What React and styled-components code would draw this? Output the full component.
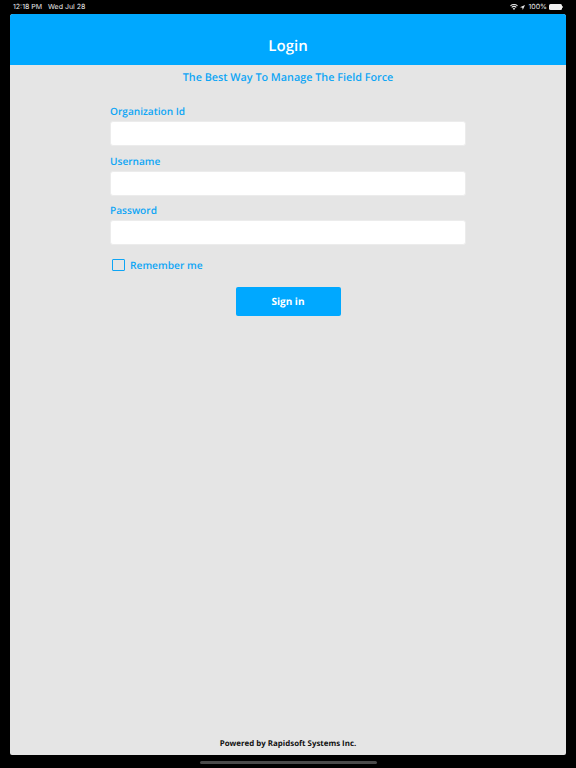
import React from 'react';
import styled, { createGlobalStyle } from 'styled-components';

const GlobalStyle = createGlobalStyle`
  html, body {
    margin: 0;
    padding: 0;
    background: #000;
    text-rendering: geometricPrecision;
  }
  #root {
    height: 768px;
  }
`;

const Screen = styled.div`
  width: 576px;
  height: 768px;
  background: #000;
  display: flex;
  flex-direction: column;
  overflow: hidden;
`;

const StatusBar = styled.div`
  height: 14px;
  flex: none;
  padding: 0 13px;
  display: flex;
  align-items: center;
  justify-content: space-between;
  color: #e8e8e8;
  font: 400 7px/12px Inter, sans-serif;
`;

const StatusGroup = styled.div`
  display: flex;
  align-items: center;
  gap: ${(props) => props.gap || 3}px;
`;

const Panel = styled.main`
  flex: none;
  height: 741px;
  margin: 0 10px;
  background: #e5e5e5;
  border-radius: 3px 3px 2px 2px;
  display: flex;
  flex-direction: column;
  overflow: hidden;
  font-family: 'Open Sans', sans-serif;
`;

const Header = styled.header`
  height: 51px;
  flex: none;
  background: #00a8ff;
  color: #fff;
  display: flex;
  align-items: flex-end;
  justify-content: center;
  padding-bottom: 7.5px;
  box-sizing: border-box;
  font-size: 15px;
  font-weight: 600;
  line-height: 24px;
`;

const Tagline = styled.h2`
  margin: 4px 0 0;
  text-align: center;
  color: #0ea5f5;
  font-size: 10.8px;
  font-weight: 600;
  line-height: 18px;
`;

const Form = styled.form`
  width: 356px;
  margin: 17.4px auto 0;
  display: flex;
  flex-direction: column;
`;

const Field = styled.div`
  display: flex;
  flex-direction: column;
  margin-bottom: 7.5px;
`;

const Label = styled.label`
  color: #0ea5f5;
  font-size: 10.1px;
  font-weight: 600;
  line-height: 15px;
  margin-bottom: 2px;
`;

const Input = styled.input`
  height: 25px;
  box-sizing: border-box;
  background: #fff;
  border: 1px solid #ececec;
  border-radius: 3px;
  outline: none;
`;

const RememberRow = styled.div`
  display: flex;
  align-items: center;
  gap: 5.5px;
  margin: 2px 0 0 2px;
  height: 20px;
`;

const Checkbox = styled.span`
  width: 12.5px;
  height: 12.5px;
  box-sizing: border-box;
  border: 1.5px solid #0ea5f5;
  border-radius: 1px;
`;

const RememberText = styled.span`
  color: #0ea5f5;
  font-size: 10.2px;
  font-weight: 600;
`;

const SignIn = styled.button`
  align-self: center;
  width: 105px;
  height: 29px;
  margin-top: 12px;
  border: none;
  border-radius: 2px;
  background: #00a8ff;
  color: #fff;
  font-family: 'Open Sans', sans-serif;
  font-size: 10px;
  font-weight: 700;
  text-rendering: geometricPrecision;
`;

const Footer = styled.footer`
  margin-top: auto;
  padding-bottom: 4.5px;
  text-align: center;
  color: #111;
  font-size: 7.9px;
  font-weight: 700;
  line-height: 13px;
`;

const HomeArea = styled.div`
  flex: 1;
  display: flex;
  align-items: flex-end;
  justify-content: center;
  padding-bottom: 4px;
`;

const HomeBar = styled.div`
  width: 177px;
  height: 3px;
  border-radius: 2px;
  background: #4a4a4a;
`;

const BatteryBody = styled.span`
  width: 13px;
  height: 6px;
  margin-left: -1px;
  border-radius: 1.5px;
  background: #f0f0f0;
`;

const BatteryCap = styled.span`
  width: 1px;
  height: 2px;
  margin-left: -3px;
  background: #999;
`;

const LocationSvg = styled.svg`
  margin-left: -1px;
`;

const WifiIcon = () => (
  <svg width="8" height="6" viewBox="0 0 18 14" fill="#eee">
    <path d="M9 14 6 10.5a4.4 4.4 0 0 1 6 0zM4.5 8.8 2.7 6.8a9.3 9.3 0 0 1 12.6 0l-1.8 2a6.7 6.7 0 0 0-9 0zM1.4 5.3 0 3.6a13.4 13.4 0 0 1 18 0l-1.4 1.7a11 11 0 0 0-15.2 0z" />
  </svg>
);

const LocationIcon = () => (
  <LocationSvg width="5" height="5" viewBox="0 0 12 12" fill="#eee">
    <path d="M12 0 0 5.4l5.6.9.9 5.7z" />
  </LocationSvg>
);

export default function App() {
  return (
    <>
      <GlobalStyle />
      <Screen>
        <StatusBar>
          <StatusGroup gap={6}>
            <span>12:18 PM</span>
            <span>Wed Jul 28</span>
          </StatusGroup>
          <StatusGroup>
            <WifiIcon />
            <LocationIcon />
            <span>100%</span>
            <BatteryBody />
            <BatteryCap />
          </StatusGroup>
        </StatusBar>
        <Panel>
          <Header>Login</Header>
          <Tagline>The Best Way To Manage The Field Force</Tagline>
          <Form>
            <Field>
              <Label>Organization Id</Label>
              <Input type="text" />
            </Field>
            <Field>
              <Label>Username</Label>
              <Input type="text" />
            </Field>
            <Field>
              <Label>Password</Label>
              <Input type="password" />
            </Field>
            <RememberRow>
              <Checkbox />
              <RememberText>Remember me</RememberText>
            </RememberRow>
            <SignIn type="button">Sign in</SignIn>
          </Form>
          <Footer>Powered by Rapidsoft Systems Inc.</Footer>
        </Panel>
        <HomeArea>
          <HomeBar />
        </HomeArea>
      </Screen>
    </>
  );
}
